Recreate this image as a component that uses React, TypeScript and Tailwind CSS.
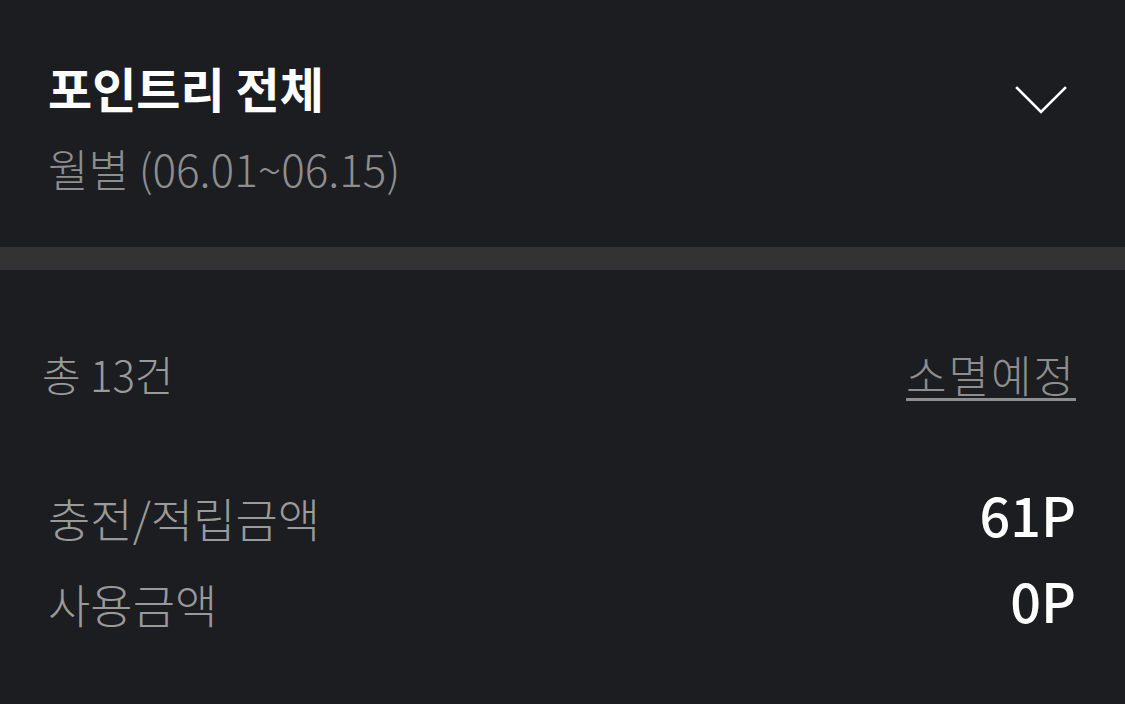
export default function App() {
  return (
    <div
      className="w-[1125px] h-[704px] overflow-hidden bg-[#1c1d21]"
      style={{ fontFamily: '"Noto Sans CJK KR", "Noto Sans", sans-serif' }}
    >
      {/* header */}
      <div className="h-[247px] pl-[48px] pr-[58px] pt-[59px]">
        <div className="flex items-start justify-between">
          <h1 className="text-[48px] leading-[56px] font-bold text-white">포인트리 전체</h1>
          <svg width="52" height="30" viewBox="0 0 52 30" className="mt-[27px]">
            <polyline
              points="2,2 26,26 50,2"
              fill="none"
              stroke="#ffffff"
              strokeWidth="2.6"
              strokeLinecap="square"
            />
          </svg>
        </div>
        <p className="mt-[26px] text-[44px] leading-[52px] font-light text-[#8e8e8e]">
          월별 (06.01~06.15)
        </p>
      </div>

      <div className="h-[23px] bg-[#333333]" />

      {/* summary */}
      <div className="pt-[79px] pl-[42px] pr-[49px]">
        <div className="flex items-center justify-between">
          <span className="text-[42px] leading-[50px] font-light text-[#9a9a9a]">총 13건</span>
          <a
            href="#"
            className="text-[44px] leading-[50px] font-light tracking-[2px] text-[#8e8e8e] underline underline-offset-[5px] decoration-[3px]"
          >
            소멸예정
          </a>
        </div>

        <div className="mt-[85px] flex flex-col gap-[23px] pl-[6px]">
          <div className="flex items-baseline justify-between">
            <span className="text-[46px] leading-[60px] font-light text-[#9a9a9a]">충전/적립금액</span>
            <span className="text-[54px] leading-[60px] font-medium text-white">61P</span>
          </div>
          <div className="flex items-baseline justify-between">
            <span className="text-[46px] leading-[60px] font-light text-[#9a9a9a]">사용금액</span>
            <span className="text-[54px] leading-[60px] font-medium text-white">0P</span>
          </div>
        </div>
      </div>
    </div>
  );
}
